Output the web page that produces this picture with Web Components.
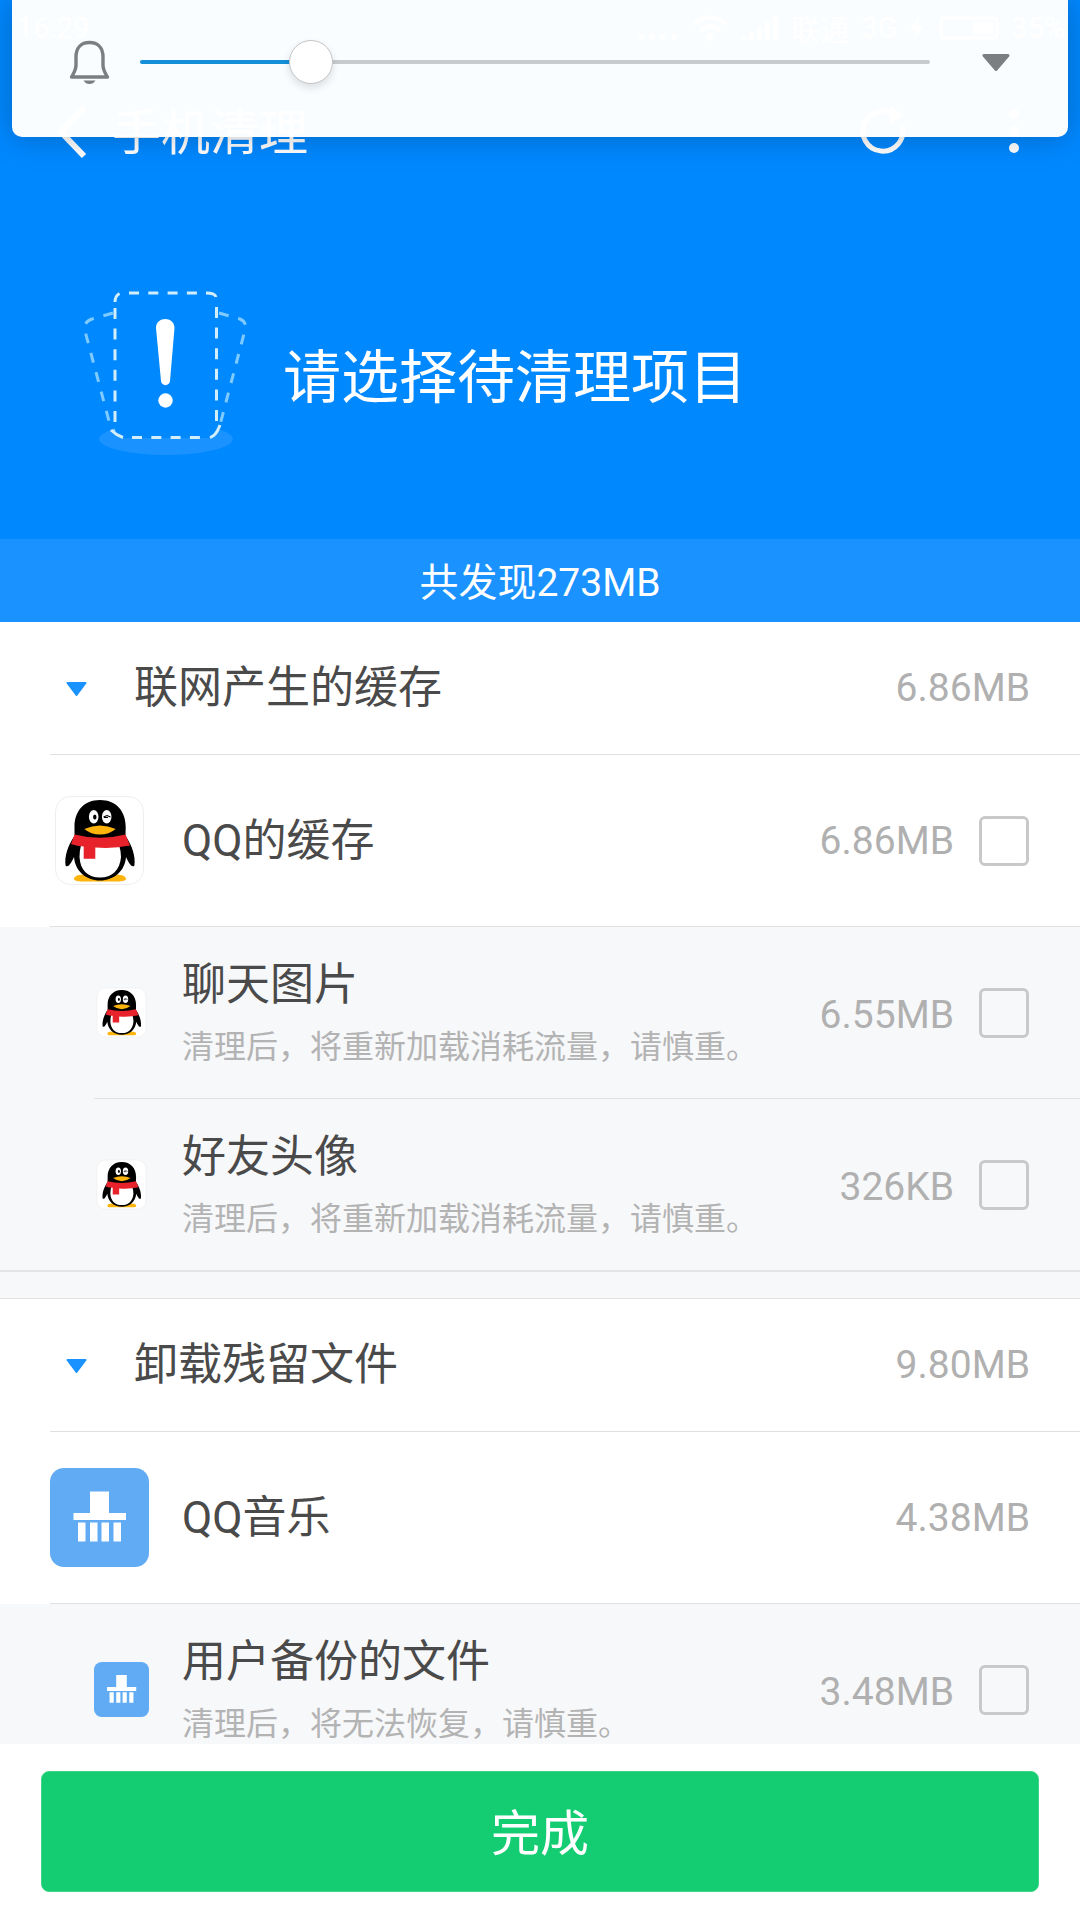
<!DOCTYPE html>
<html lang="zh-CN">
<head>
<meta charset="utf-8">
<meta name="viewport" content="width=device-width, initial-scale=1">
<title>手机清理</title>
<style>
  body {
    margin: 0;
    font-family: Roboto, "Noto Sans CJK SC", sans-serif;
    color: #4a4a4a;
    background: #fff;
  }
</style>
</head>
<body>
<cleaner-app>
  <volume-panel slot="overlay"></volume-panel>
  <cleaner-header slot="header">
    <span slot="title">手机清理</span>
    <span slot="message">请选择待清理项目</span>
    <span slot="total">共发现273MB</span>
  </cleaner-header>

  <clean-section>
    <span slot="title">联网产生的缓存</span>
    <span slot="size">6.86MB</span>
    <clean-item checkable>
      <qq-icon slot="icon"></qq-icon>
      QQ的缓存
      <span slot="size">6.86MB</span>
    </clean-item>
    <clean-item checkable sub>
      <qq-icon slot="icon"></qq-icon>
      聊天图片
      <span slot="note">清理后，将重新加载消耗流量，请慎重。</span>
      <span slot="size">6.55MB</span>
    </clean-item>
    <clean-item checkable sub last>
      <qq-icon slot="icon"></qq-icon>
      好友头像
      <span slot="note">清理后，将重新加载消耗流量，请慎重。</span>
      <span slot="size">326KB</span>
    </clean-item>
  </clean-section>

  <clean-section>
    <span slot="title">卸载残留文件</span>
    <span slot="size">9.80MB</span>
    <clean-item>
      <brush-icon slot="icon"></brush-icon>
      QQ音乐
      <span slot="size">4.38MB</span>
    </clean-item>
    <clean-item checkable sub last>
      <brush-icon slot="icon"></brush-icon>
      用户备份的文件
      <span slot="note">清理后，将无法恢复，请慎重。</span>
      <span slot="size">3.48MB</span>
    </clean-item>
  </clean-section>

  <button-bar slot="footer">完成</button-bar>
</cleaner-app>

<script>
function define(name, html, setup) {
  const template = document.createElement('template');
  template.innerHTML = html;
  window.customElements.define(name, class extends HTMLElement {
    constructor() {
      super();
      this.attachShadow({ mode: 'open' });
      this.shadowRoot.appendChild(template.content.cloneNode(true));
      if (setup) setup(this, this.shadowRoot);
    }
  });
}

define('cleaner-app', `
  <style>
    :host {
      display: flex;
      flex-direction: column;
      position: relative;
      height: 100vh;
      overflow: hidden;
    }
    main {
      flex: 1;
      min-height: 0;
      overflow: hidden;
      background: #f7f8fa;
    }
  </style>
  <slot name="header"></slot>
  <main><slot></slot></main>
  <slot name="footer"></slot>
  <slot name="overlay"></slot>
`);

// ringer volume, floats over the top of the screen
define('volume-panel', `
  <style>
    :host {
      display: flex;
      align-items: center;
      position: absolute;
      top: 0;
      left: 12px;
      right: 12px;
      z-index: 1;
      box-sizing: border-box;
      padding: 40px 51px 53px 56px;
      border-radius: 0 0 10px 10px;
      background: rgba(255, 255, 255, .98);
      box-shadow: 0 0 32px rgba(0, 0, 0, .25);
    }
    svg {
      display: block;
    }
    input {
      -webkit-appearance: none;
      appearance: none;
      flex: 1;
      min-width: 0;
      height: 44px;
      margin: 0 45px 0 28px;
      background: transparent;
    }
    input::-webkit-slider-runnable-track {
      height: 4px;
      border-radius: 2px;
      background: linear-gradient(90deg, #158fd8 21%, #c8cbce 21%);
    }
    input::-webkit-slider-thumb {
      -webkit-appearance: none;
      box-sizing: border-box;
      width: 44px;
      height: 44px;
      margin-top: -20px;
      border: 1px solid #c4c6c8;
      border-radius: 50%;
      background: #fff;
      box-shadow: 0 4px 8px rgba(0, 0, 0, .12);
    }
    button {
      padding: 6px;
      border: 0;
      background: none;
    }
  </style>
  <svg width="44" height="44" viewBox="0 0 44 44" fill="none" stroke="#7b7f82" stroke-width="3.4" stroke-linejoin="round">
    <path d="M8 17C8 8 13 2.500 21.500 2.500S35 8 35 17V25C35 30 36.500 32 39.500 37H3.500C6.500 32 8 30 8 25Z"/>
    <path d="M15.500 40.500H27.500C26 43 24 44 21.500 44S17 43 15.500 40.500Z" fill="#7b7f82" stroke="none"/>
  </svg>
  <input type="range" min="0" max="15" value="3" aria-label="铃声音量">
  <button type="button" aria-label="展开">
    <svg width="30" height="18" viewBox="0 0 30 18"><path d="M3 2.500H27L15 16.500Z" fill="#7b7f82" stroke="#7b7f82" stroke-width="3" stroke-linejoin="round"/></svg>
  </button>
`);

define('status-bar', `
  <style>
    :host {
      display: flex;
      align-items: center;
      gap: 12px;
      height: 55px;
      padding: 0 15px 0 17px;
      font-size: 29px;
      color: #fff;
    }
    .space {
      flex: 1;
    }
  </style>
  <span>16:29</span>
  <span class="space"></span>
  <svg width="42" height="28" viewBox="0 0 42 28" fill="#fff"><circle cx="4" cy="23" r="3"/><circle cx="15" cy="23" r="3"/><circle cx="26" cy="23" r="3"/><circle cx="37" cy="23" r="3"/></svg>
  <svg width="38" height="28" viewBox="0 0 38 28" fill="none" stroke="#fff" stroke-width="4"><path d="M3 10Q19 -3 35 10M9 17Q19 8 29 17"/><circle cx="19" cy="23" r="2"/></svg>
  <svg width="38" height="28" viewBox="0 0 38 28" fill="#fff"><path d="M0 22h5v4H0zM8 18h5v8H8zM16 13h5v13h-5zM24 8h5v18h-5zM32 2h5v24h-5z"/></svg>
  <span>联通</span>
  <span>3G</span>
  <svg width="16" height="28" viewBox="0 0 16 28" fill="#fff"><path d="M10 2L1 16H7L5 26L15 11H9Z"/></svg>
  <svg width="62" height="28" viewBox="0 0 62 28"><rect x="4" y="4" width="56" height="20" rx="4" fill="none" stroke="#fff" stroke-width="3"/><rect x="36" y="8" width="20" height="12" fill="#fff"/></svg>
  <span>35%</span>
`);

define('cleaner-header', `
  <style>
    :host {
      display: block;
      background: #08f;
      color: #fff;
    }
    nav {
      display: flex;
      align-items: center;
      height: 152px;
      padding: 0 48px 0 38px;
    }
    nav button {
      padding: 0 12px;
      border: 0;
      background: none;
    }
    svg {
      display: block;
    }
    h1 {
      flex: 1;
      margin: 0 0 0 12px;
      padding-top: 6px;
      font-size: 49px;
      line-height: 64px;
      font-weight: 400;
    }
    .more {
      margin-left: 76px;
    }
    .hero {
      display: flex;
      align-items: center;
      gap: 33px;
      height: 328px;
      padding: 4px 80px 0;
    }
    .message {
      margin: 0;
      padding-top: 6px;
      font-size: 58px;
      line-height: 80px;
      white-space: nowrap;
    }
    .total {
      margin: 0;
      padding-top: 6px;
      font-size: 39px;
      line-height: 77px;
      text-align: center;
      background: #1a92ff;
    }
  </style>
  <status-bar></status-bar>
  <nav>
    <button type="button" aria-label="返回">
      <svg width="38" height="56" viewBox="0 0 38 56" fill="none" stroke="#fff" stroke-width="6"><path d="M34 5L11 29L34 53"/></svg>
    </button>
    <h1><slot name="title"></slot></h1>
    <button type="button" aria-label="刷新">
      <svg width="50" height="50" viewBox="0 0 50 50"><path d="M34 8A20 20 0 1 1 25 5.500" fill="none" stroke="#fff" stroke-width="5" transform="rotate(45 25 26)"/><path d="M32 0V18L46 9Z" fill="#fff"/></svg>
    </button>
    <button class="more" type="button" aria-label="更多">
      <svg width="12" height="46" viewBox="0 0 12 46" fill="#fff"><circle cx="6" cy="6" r="5"/><circle cx="6" cy="23" r="5"/><circle cx="6" cy="40" r="5"/></svg>
    </button>
  </nav>
  <div class="hero">
    <svg width="170" height="170" viewBox="81 291 170 170" fill="none" stroke-width="3">
      <ellipse cx="167" cy="440" rx="67" ry="16" fill="#1a92ff"/>
      <path d="M114 314L93 320Q84 323 86 332L110 422Q112 430 118 434" stroke="#7fcbff" stroke-dasharray="10 10"/>
      <path d="M220 314L241 320Q248 323 246 331L222 422Q221 428 217 434" stroke="#7fcbff" stroke-dasharray="10 10"/>
      <rect x="116" y="294" width="102" height="145" rx="9" fill="#08f" stroke="none"/>
      <path d="M130 294H204" stroke="#d3eefb" stroke-dasharray="10 9.300"/>
      <path d="M133 438.500H202" stroke="#d3eefb" stroke-dasharray="10 9.300"/>
      <path d="M116 309V423M217.500 308V423" stroke="#d3eefb" stroke-dasharray="11 9.600"/>
      <path d="M116 303Q116 297 120.500 294.500M207 294Q216 294 217 298M112 431Q117 436 124 438.500M211 438.500Q217 437 221 426" stroke="#d3eefb"/>
      <path d="M157 329C157 317 175.500 317 175.500 329L171 382C170.500 387.500 162.500 387.500 162 382Z" fill="#fff"/>
      <circle cx="166.500" cy="401.500" r="7.200" fill="#fff"/>
    </svg>
    <p class="message"><slot name="message"></slot></p>
  </div>
  <p class="total"><slot name="total"></slot></p>
`);

define('clean-section', `
  <style>
    :host {
      display: block;
      margin-bottom: 26px;
      border-bottom: 2px solid #e3e4e7;
    }
    :host(:not(:first-of-type)) {
      border-top: 1px solid #e0e1e3;
    }
    h2 {
      margin: 0;
      padding-left: 50px;
      background: #fff;
      font-size: 44px;
      font-weight: 400;
    }
    button {
      display: flex;
      align-items: center;
      width: 100%;
      height: 133px;
      padding: 0 50px 0 16px;
      border: 0;
      border-bottom: 1px solid #e0e0e0;
      background: none;
      color: inherit;
      font: inherit;
      line-height: 64px;
      text-align: left;
    }
    .title {
      flex: 1;
      margin-left: 46px;
    }
    .size {
      font-size: 39px;
      color: #b0b0b0;
    }
  </style>
  <h2>
    <button type="button" aria-expanded="true">
      <svg width="22" height="16" viewBox="0 0 22 16"><path d="M1.500 3H19.500L10.500 15Z" fill="#1a92ff" stroke="#1a92ff" stroke-width="2" stroke-linejoin="round"/></svg>
      <span class="title"><slot name="title"></slot></span>
      <span class="size"><slot name="size"></slot></span>
    </button>
  </h2>
  <div id="items"><slot></slot></div>
`, (host, root) => {
  const button = root.querySelector('button');
  const items = root.querySelector('#items');
  button.addEventListener('click', () => {
    items.hidden = !items.hidden;
    button.setAttribute('aria-expanded', String(!items.hidden));
  });
});

define('clean-item', `
  <style>
    :host {
      --icon: 99px;
      display: block;
      padding-left: 50px;
      background: #fff;
    }
    :host([sub]) {
      --icon: 55px;
      padding-left: 94px;
      background: #f7f8fa;
    }
    .row {
      display: flex;
      align-items: center;
      height: 171px;
      padding-right: 50px;
      border-bottom: 1px solid #e0e1e3;
    }
    :host([checkable]) .row {
      padding-right: 51px;
    }
    :host([last]) .row {
      border-bottom: 0;
    }
    label {
      flex: 1;
      min-width: 0;
      margin-left: 33px;
      font-size: 44px;
      line-height: 64px;
    }
    .note {
      display: block;
      font-size: 32px;
      line-height: 60px;
      color: #b3b3b3;
      white-space: nowrap;
    }
    .size {
      font-size: 39px;
      color: #b0b0b0;
    }
    :host([sub]) label,
    :host([sub]) .size {
      padding-top: 4px;
    }
    input {
      -webkit-appearance: none;
      appearance: none;
      width: 50px;
      height: 50px;
      margin: 0 0 0 25px;
      border: 3px solid #c9c9c9;
      border-radius: 6px;
    }
    input:checked {
      border-color: #1a92ff;
      background: #1a92ff;
    }
    :host(:not([checkable])) input {
      display: none;
    }
  </style>
  <div class="row">
    <slot name="icon"></slot>
    <label for="pick"><slot></slot><span class="note"><slot name="note"></slot></span></label>
    <span class="size"><slot name="size"></slot></span>
    <input type="checkbox" id="pick">
  </div>
`, (host, root) => {
  if (!host.querySelector('[slot=note]')) root.querySelector('.note').remove();
});

define('qq-icon', `
  <style>
    :host {
      display: block;
      width: var(--icon);
      height: var(--icon);
    }
    svg {
      display: block;
      width: 100%;
      height: 100%;
    }
  </style>
  <svg viewBox="0 0 99 99">
    <rect x="5.500" y="5.500" width="88" height="88" rx="15" fill="#fff" stroke="#e6e6e6" stroke-width=".7"/>
    <path d="M24 88C24 84 31 83 37 84L50 88L63 84C69 83 76 84 76 88C76 91 66 90.500 62 90.500H38C34 90.500 24 91 24 88Z" fill="#fdb40d"/>
    <path d="M24.500 45C18 54 14 66 15.700 75C19 77 22 70 24 66C25 80 36 89.500 50 89.500S75 80 76 66C78 70 81 77 84.300 75C86 66 82 54 75.500 45L75.700 36C75.700 20 66 9 50 9S24.500 20 24.500 36Z"/>
    <path d="M31 54H69Q71 60 71 66C70 79 62 86.500 50 86.500S30 79 29.500 66Q29.500 60 31 54Z" fill="#fff"/>
    <path d="M24.500 43.500Q50 50 75.500 43.500L80 54.500Q63 58 45.300 56.500V67.700H33.700V55.500Q27 55 21 53Z" fill="#e8222a"/>
    <path d="M34.300 38Q42 34.500 50 34.500T65.700 38Q59 43.500 50 43.500T34.300 38Z" fill="#fdb40d"/>
    <ellipse cx="43.700" cy="25.700" rx="4.800" ry="6.700" fill="#fff"/>
    <ellipse cx="56.700" cy="25.700" rx="4.800" ry="6.700" fill="#fff"/>
    <ellipse cx="44.800" cy="26" rx="1.700" ry="2.600"/>
    <path d="M53.500 26L57 24.500L60.500 26M54 26.500H58" fill="none" stroke="#000" stroke-width="1.100"/>
  </svg>
`);

define('brush-icon', `
  <style>
    :host {
      display: block;
      width: var(--icon);
      height: var(--icon);
    }
    svg {
      display: block;
      width: 100%;
      height: 100%;
    }
  </style>
  <svg viewBox="0 0 99 99">
    <rect width="99" height="99" rx="14" fill="#61abf5"/>
    <path d="M40 23.500H59V45H76V52H23.500V45H40ZM28 54.500H35.500V73.500H28ZM40 54.500H47.500V73.500H40ZM51.500 54.500H59V73.500H51.500ZM63.500 54.500H71V73.500H63.500Z" fill="#fff"/>
  </svg>
`);

define('button-bar', `
  <style>
    :host {
      display: block;
      padding: 27px 41px 28px;
      background: #fff;
    }
    button {
      display: block;
      width: 100%;
      height: 121px;
      padding: 6px 0 0;
      border: 1px solid #3fd689;
      border-radius: 8px;
      background: #14cd72;
      color: #fff;
      font-family: inherit;
      font-size: 49px;
      line-height: 64px;
    }
  </style>
  <button type="button"><slot></slot></button>
`);
</script>
</body>
</html>
